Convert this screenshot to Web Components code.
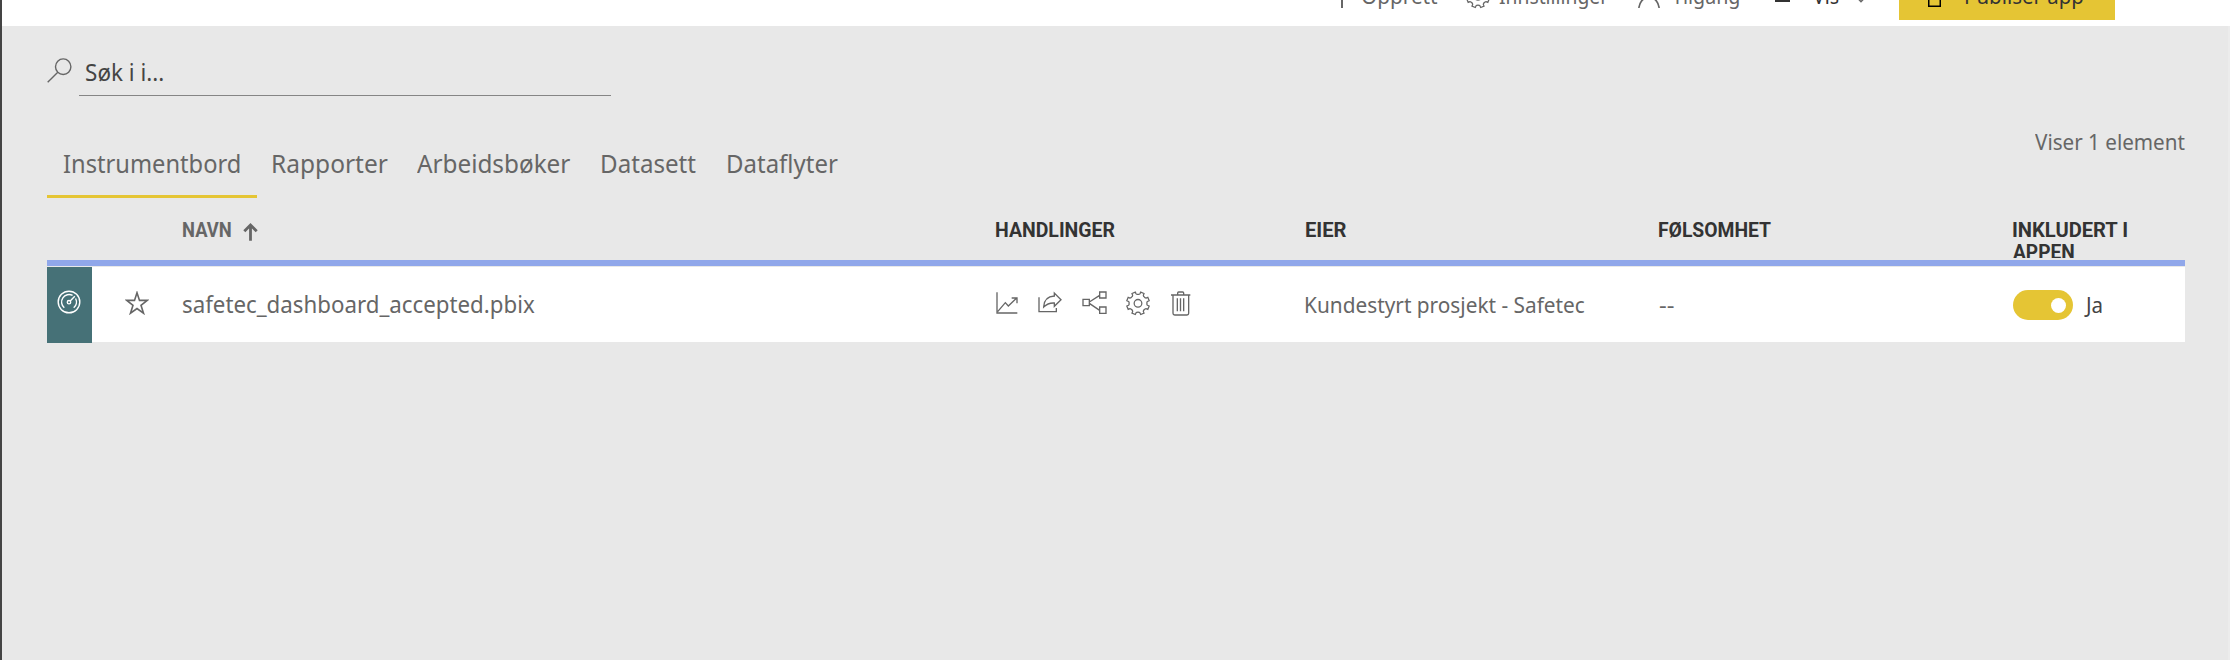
<!DOCTYPE html>
<html lang="nb">
<head>
<meta charset="utf-8">
<title>Arbeidsområde</title>
<style>
html,body{margin:0;height:100%;overflow:hidden}
body{font-family:"Noto Sans","Open Sans",sans-serif;color:#666}
</style>
</head>
<body>
<workspace-page></workspace-page>
<script>
const ctx = document.createElement('canvas').getContext('2d');

/* A text run whose visible ink spans exactly `w` pixels. */
class FitText extends HTMLElement {
  constructor() {
    super();
    this.attachShadow({mode: 'open'}).innerHTML = `<style>
      :host{display:block;flex:none;white-space:pre;font-family:"Noto Sans",sans-serif}
      span{display:inline-block;transform-origin:0 0}
    </style><span><slot></slot></span>`;
  }
  connectedCallback() {
    const size = this.getAttribute('size') || 21;
    const face = this.getAttribute('face') || 'Noto Sans';
    const weight = this.getAttribute('weight') || 400;
    const w = +this.getAttribute('w');
    ctx.font = `${weight} ${size}px "${face}"`;
    const m = ctx.measureText(this.textContent);
    const k = w / (m.actualBoundingBoxRight + m.actualBoundingBoxLeft);
    this.style.cssText += `;width:${w}px;font:${weight} ${size}px/${this.getAttribute('lh') || 28}px "${face}",sans-serif`;
    this.shadowRoot.querySelector('span').style.transform =
      `translateX(${m.actualBoundingBoxLeft * k}px) scaleX(${k})`;
  }
}
customElements.define('fit-text', FitText);

function gear(cx, cy, R, r) {
  let d = '';
  for (let i = 0; i < 8; i++) {
    const p = (deg, rad) => {
      const a = (i * 45 + 22.5 + deg) * Math.PI / 180;
      return (cx + rad * Math.cos(a)).toFixed(2) + ' ' + (cy + rad * Math.sin(a)).toFixed(2);
    };
    d += (i ? 'L' : 'M') + p(-11, r + 1) + 'L' + p(-9, R) + 'L' + p(9, R) + 'L' + p(11, r + 1) + 'Q' + p(16, r - 2) + ' ' + p(22.5, r - 1) + 'Q' + p(29, r - 2) + ' ' + p(34, r + 1);
  }
  return d + 'Z';
}

const ICONS = {
  search: [25, 25, '0 0 25 25', 1.4, '<ellipse cx="16.2" cy="8.7" rx="7.7" ry="7.8"/><path d="M10.8 14.3 .7 24.3"/>'],
  chart: [22, 28, '48 236 66 84', 4, '<path d="M51 246V308H112M53 304 76 277 85 287 110 263M95 263H111V279"/>'],
  share: [24, 28, '174 236 72 84', 4, '<path d="M177 261V304H229V293M191 290C192 270 202 258 223 257V248L243 268 223 288V278C208 277 200 281 191 290Z"/>'],
  lineage: [25, 28, '306 236 75 84', 4, '<path d="M309 267H328V286H309ZM359 245H378V263H359ZM359 290H378V309H359ZM328 275 359 255M328 279 359 300"/>'],
  gear: [24, 28, '438 236 72 84', 3.8, `<path d="${gear(474, 279, 34.5, 28)}"/><circle cx="474" cy="279" r="11.5"/>`],
  trash: [20, 28, '573 236 60 84', 4, '<path d="M573 254H631M593 253V248Q593 245 596 245H608Q611 245 611 248V253M579 255V309Q579 314 584 314H621Q626 314 626 309V255M592 264V303M601.5 264V303M611 264V303"/>'],
  star: [24, 24, '0 0 24 24', 1.6, '<path d="M12 1.7 14.5 9.4H22.3L16 14.3 18.5 22.2 12 17.5 5.5 22.2 8 14.3 1.7 9.4H9.5Z"/>'],
  gauge: [24, 24, '0 0 24 24', 1.4, '<circle cx="12" cy="12" r="10.8"/><path d="M7.3 17.8A7.5 7.5 0 0 1 15.6 5.4M18.6 8.5A7.5 7.5 0 0 1 16.7 17.8M13.2 11 17.8 6.3"/><circle cx="12" cy="12.2" r="1.7"/>'],
  up: [16, 18, '0 0 16 18', 2.8, '<path d="M7.5 17.8V2.5M1.3 8.3 7.5 2 13.7 8.3"/>'],
  plus: [20, 20, '0 0 20 20', 2, '<path d="M10 0V20M0 10H20"/>'],
  person: [24, 24, '0 0 24 24', 1.7, '<circle cx="12" cy="7" r="6"/><path d="M1.8 24C3 17 7 13.5 12 13.5S21 17 22.2 24"/>'],
  menu: [15, 14, '0 0 15 14', 2, '<path d="M0 1H15M0 7H15M0 13H15"/>'],
  chevron: [12, 8, '0 0 12 8', 1.5, '<path d="M.5 1 6 6.7 11.5 1"/>'],
  box: [13, 20, '0 0 13 20', 1.5, '<path d="M.75 .75H12.25V19.25H.75Z"/>']
};

class UiIcon extends HTMLElement {
  connectedCallback() {
    const [w, h, box, sw, body] = ICONS[this.getAttribute('name')];
    this.attachShadow({mode: 'open'}).innerHTML = `<style>
      :host{display:block;flex:none;width:${w}px;height:${h}px}
      svg{display:block}
    </style><svg width="${w}" height="${h}" viewBox="${box}" fill="none" stroke="currentColor" stroke-width="${sw}">${body}</svg>`;
  }
}
customElements.define('ui-icon', UiIcon);

function define(name, html) {
  const t = document.createElement('template');
  t.innerHTML = html;
  customElements.define(name, class extends HTMLElement {
    constructor() {
      super();
      this.attachShadow({mode: 'open'}).append(t.content.cloneNode(true));
    }
  });
}

define('toggle-switch', `<style>
  :host{display:flex;gap:11px;color:#444}
  i{box-sizing:border-box;width:60px;height:30px;border-radius:15px;background:#e5c534;padding:8px 7px;display:flex;justify-content:flex-end}
  i::after{content:"";width:15px;height:15px;border-radius:50%;background:#fff}
</style><i></i><slot></slot>`);

define('command-bar', `<style>
  :host{display:flex;height:26px;background:#fff;overflow:hidden;align-items:flex-start;padding-left:1330px;color:#666}
  fit-text{margin-top:-18px}
  .dark{color:#333}
  .publish{display:flex;flex:none;align-items:flex-start;width:187px;height:20px;padding-left:29px;background:#e5c534;color:#333;margin-left:32.5px}
</style>
<ui-icon name="plus" style="margin:-12px 10px 0 0"></ui-icon>
<fit-text w="76">Opprett</fit-text>
<ui-icon name="gear" style="margin:-18px 9px 0 27.5px"></ui-icon>
<fit-text w="109.5">Innstillinger</fit-text>
<ui-icon name="person" style="margin:-16px 11px 0 28.5px"></ui-icon>
<fit-text w="67.5">Tilgang</fit-text>
<ui-icon class="dark" name="menu" style="margin:-12px 23px 0 36px"></ui-icon>
<fit-text class="dark" w="26">Vis</fit-text>
<ui-icon name="chevron" style="margin:-5px 0 0 15.5px"></ui-icon>
<div class="publish"><ui-icon name="box" style="margin:-13px 25px 0 0;color:#000"></ui-icon><fit-text w="117">Publiser app</fit-text></div>`);

define('search-box', `<style>
  :host{display:flex;align-items:flex-start;color:#666}
  ui-icon{margin:2px 7px 0 0}
  div{box-sizing:border-box;width:532px;height:40px;border-bottom:1px solid #858585;color:#444;padding-left:6.5px}
  ::slotted(*){margin-top:-1px}
</style><ui-icon name="search"></ui-icon><div><slot></slot></div>`);

define('content-tabs', `<style>
  :host{display:flex;color:#666}
  .tab{display:block;height:49px;padding:0 14.5px 0 15.5px}
  .on{width:176px;padding:0 17.5px 0 16.5px;border-bottom:3px solid #e5c534}
</style>
<div class="tab on"><fit-text size="25" lh="34" w="176">Instrumentbord</fit-text></div>
<div class="tab"><fit-text size="25" lh="34" w="114.5">Rapporter</fit-text></div>
<div class="tab"><fit-text size="25" lh="34" w="153">Arbeidsbøker</fit-text></div>
<div class="tab" style="padding-left:17px"><fit-text size="25" lh="34" w="94">Datasett</fit-text></div>
<div class="tab" style="padding-left:17.5px"><fit-text size="25" lh="34" w="109.5">Dataflyter</fit-text></div>`);

define('content-table', `<style>
  :host{display:block;width:2138px}
  .head,.row{display:grid;grid-template-columns:45px 90.6px 813.4px 309.6px 353.9px 353.5px 172px}
  .head{height:38px;overflow:hidden;color:#333}
  .head>:first-child{grid-column:3}
  .sort{display:flex;color:#666;gap:12px}
  .rule{height:6px;background:#90a7ea;margin:2px 0 1px}
  .row{height:75px;background:#fff;color:#666}
  .type{background:#467177;color:#fff;padding:23.3px 0 0 9.7px}
  .star{padding:24px 0 0 33px}
  .actions{display:flex;padding-top:21.7px}
  .actions ui-icon{margin-right:20px}
</style>
<div class="head">
  <div class="sort"><fit-text face="Roboto" weight="700" size="19.5" lh="22" w="48">NAVN</fit-text><ui-icon name="up" style="margin-top:3px"></ui-icon></div>
  <fit-text face="Roboto" weight="700" size="19.5" lh="22" w="119.5">HANDLINGER</fit-text>
  <fit-text face="Roboto" weight="700" size="19.5" lh="22" w="41">EIER</fit-text>
  <fit-text face="Roboto" weight="700" size="19.5" lh="22" w="112">FØLSOMHET</fit-text>
  <div style="padding-left:.5px"><fit-text face="Roboto" weight="700" size="19.5" lh="22" w="115">INKLUDERT I</fit-text><fit-text face="Roboto" weight="700" size="19.5" lh="22" w="61">APPEN</fit-text></div>
</div>
<div class="rule"></div>
<div class="row">
  <div class="type"><ui-icon name="gauge"></ui-icon></div>
  <div class="star"><ui-icon name="star"></ui-icon></div>
  <fit-text size="23" lh="74" w="351.5">safetec_dashboard_accepted.pbix</fit-text>
  <div class="actions"><ui-icon name="chart"></ui-icon><ui-icon name="share"></ui-icon><ui-icon name="lineage" style="margin-right:19px"></ui-icon><ui-icon name="gear" style="margin-right:21px"></ui-icon><ui-icon name="trash"></ui-icon></div>
  <fit-text size="21.5" lh="76" w="278.5">Kundestyrt prosjekt - Safetec</fit-text>
  <fit-text size="21.5" lh="76" w="15.5">--</fit-text>
  <toggle-switch style="padding-top:23px"><fit-text size="21.5" lh="30" w="18">Ja</fit-text></toggle-switch>
</div>`);

define('workspace-page', `<style>
  :host{display:block;box-sizing:border-box;height:660px;border-left:2px solid #444;background:#e8e8e8;overflow:hidden}
  main{box-sizing:border-box;height:634px;padding:30px 43px 0 45px;border-right:2px solid #ececec}
  .bar{display:flex;justify-content:space-between;margin:50px 0 22px;height:52px}
</style>
<command-bar></command-bar>
<main>
  <search-box><fit-text size="24" lh="34" w="77">Søk i i...</fit-text></search-box>
  <div class="bar"><content-tabs></content-tabs><fit-text size="22" lh="28" w="150" style="color:#666;margin-top:-19px">Viser 1 element</fit-text></div>
  <content-table></content-table>
</main>`);
</script>
</body>
</html>
